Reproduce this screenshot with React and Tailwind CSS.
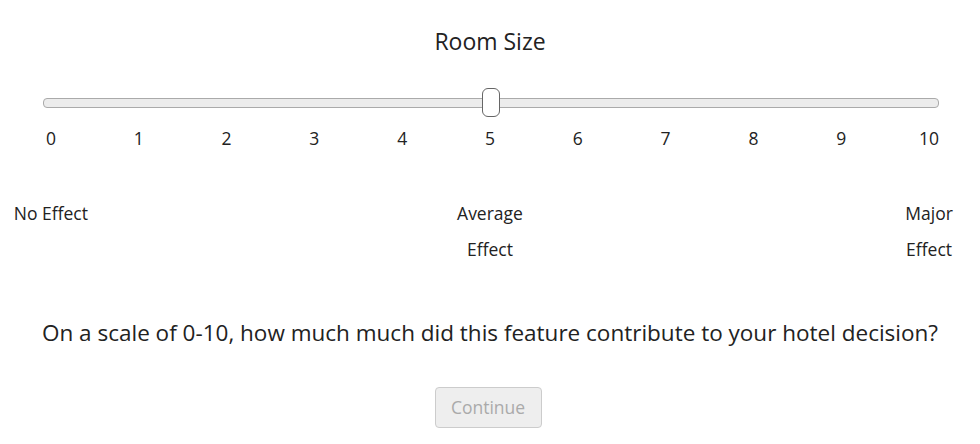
import React, { useState } from 'react'

const TICKS = [0, 1, 2, 3, 4, 5, 6, 7, 8, 9, 10]

const EFFECTS = {
  0: 'No Effect',
  5: 'Average Effect',
  10: 'Major Effect',
}

export default function App() {
  const [value] = useState(5)

  return (
    <div className="w-[980px] h-[444px] bg-white text-[#222] flex flex-col items-center" style={{ fontFamily: '"Open Sans", sans-serif' }}>
      {/* Title */}
      <div className="pt-[26px] text-[23px] leading-[30px]">Room Size</div>

      {/* Slider */}
      <div className="w-[966px] mt-[32px]">
        <div className="relative h-[29px] ml-[36px] mr-[34px] flex items-center">
          <div className="w-full h-[10px] rounded-[4px] border border-[#aaa] bg-[#ececec]" />
          <div
            className="absolute top-0 w-[18px] h-[29px] -ml-[9px] rounded-[6px] border border-[#666] bg-white"
            style={{ left: `calc(8px + (100% - 16px) * ${value / 10})` }}
          />
        </div>

        {/* Tick labels */}
        <div className="grid grid-cols-11 mt-[9px] text-[17.5px] leading-[24px]">
          {TICKS.map(t => (
            <div key={t} className="text-center">{t}</div>
          ))}
        </div>

        {/* Effect labels */}
        <div className="grid grid-cols-11 mt-[45px] text-[17.5px] leading-[36px] h-[72px]">
          {TICKS.map(t => (
            <div key={t} className="text-center">{EFFECTS[t] || ''}</div>
          ))}
        </div>
      </div>

      {/* Question */}
      <div className="mt-[51px] text-[22.5px] leading-[30px] whitespace-nowrap">
        On a scale of 0-10, how much much did this feature contribute to your hotel decision?
      </div>

      <button
        disabled
        className="mt-[39px] mr-[4px] w-[107px] h-[41px] rounded-[4px] border border-[#ccc] bg-[#eee] text-[#aaa] text-[17.5px]"
      >
        Continue
      </button>
    </div>
  )
}
